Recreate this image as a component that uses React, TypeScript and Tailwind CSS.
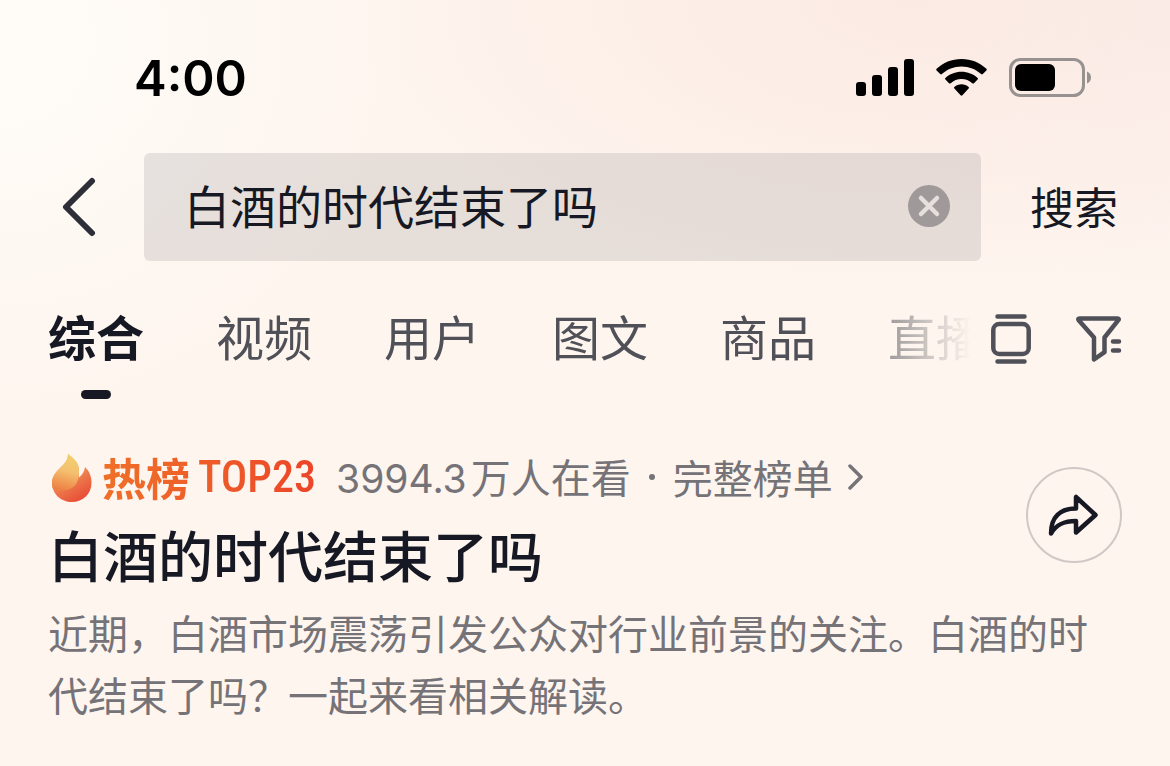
import React, { useState } from "react";

const tabs = ["综合", "视频", "用户", "图文", "商品", "直播"];

const StatusBar = () => {
  return (
    <div className="flex h-[60px] items-center justify-between pl-[134px] pr-[78px]">
      <span className="font-['Inter',sans-serif] text-[49px] font-semibold leading-none text-black">
        4:00
      </span>
      <div className="flex items-center gap-[22px]">
        <svg width="58" height="38" viewBox="0 0 58 38" aria-hidden="true">
          <rect x="0" y="23" width="10" height="14" rx="3" />
          <rect x="16" y="16" width="10" height="21" rx="3" />
          <rect x="32" y="8" width="10" height="29" rx="3" />
          <rect x="48" y="0" width="10" height="37" rx="3" />
        </svg>
        <svg width="51" height="38" viewBox="0 0 51 38" aria-hidden="true">
          <path d="M25.5 0C15.8 0 7 3.700 .6 9.800q-.8.800 0 1.600l3.600 3.600q.8.800 1.700 0C11 10.200 17.900 7.400 25.500 7.400s14.500 2.800 19.600 7.600q.9.800 1.700 0l3.600-3.600q.8-.8 0-1.600C44 3.700 35.200 0 25.500 0z" />
          <path d="M25.500 12.700c-6.200 0-11.800 2.300-16.100 6.200q-.9.800 0 1.700l3.600 3.600q.8.800 1.700 0c2.900-2.500 6.700-4.100 10.800-4.100s7.900 1.600 10.800 4.100q.9.800 1.700 0l3.600-3.600q.9-.9 0-1.700c-4.300-3.900-9.900-6.200-16.100-6.200z" />
          <path d="M25.500 25.300c-2.700 0-5.200 1-7.100 2.600q-.9.800 0 1.700l6.200 6.700q.9.900 1.800 0l6.200-6.700q.9-.9 0-1.700c-1.900-1.600-4.400-2.600-7.100-2.600z" />
        </svg>
        <svg width="83" height="40" viewBox="0 0 83 40" aria-hidden="true">
          <rect
            x="1.500"
            y="1.500"
            width="73"
            height="36"
            rx="10"
            fill="none"
            stroke="#979190"
            strokeWidth="3"
          />
          <rect x="6" y="6" width="40" height="27" rx="6" />
          <path d="M78 13.500v12c2.500-1 4-3.300 4-6s-1.500-5-4-6z" fill="#979190" />
        </svg>
      </div>
    </div>
  );
};

const SearchHeader = () => {
  const [query, setQuery] = useState("白酒的时代结束了吗");

  return (
    <header className="mt-[45px] flex items-center pl-[60px] pr-[52px]">
      <button type="button" aria-label="返回" className="mr-12 shrink-0">
        <svg width="36" height="60" viewBox="0 0 36 60" fill="none">
          <path
            d="M32 4 6 30l26 26"
            stroke="#2d2e38"
            strokeWidth="6"
            strokeLinecap="round"
            strokeLinejoin="round"
          />
        </svg>
      </button>
      <div className="flex h-[108px] min-w-0 flex-1 items-center rounded-md bg-[#161823]/10 pb-0.5 pl-10 pr-[31px]">
        <input
          type="text"
          aria-label="搜索内容"
          value={query}
          onChange={(e) => setQuery(e.target.value)}
          className="min-w-0 flex-1 bg-transparent pb-1 text-[46px] leading-[68px] text-[#161823] outline-none"
        />
        <button type="button" aria-label="清空" onClick={() => setQuery("")}>
          <svg width="42" height="42" viewBox="0 0 42 42" className="block">
            <circle cx="21" cy="21" r="21" fill="#9f9999" />
            <path
              d="m13 13 16 16M29 13 13 29"
              stroke="#e7dfdc"
              strokeWidth="4.500"
              strokeLinecap="round"
            />
          </svg>
        </button>
      </div>
      <button
        type="button"
        className="ml-[49px] shrink-0 pb-0.5 text-[44px] leading-[68px] text-[#161823]">
        搜索
      </button>
    </header>
  );
};

const TabBar = () => {
  const [active, setActive] = useState("综合");

  return (
    <nav className="mt-10 flex items-start pl-12 pr-12">
      <div className="flex min-w-0 flex-1 gap-[72px] overflow-hidden [mask-image:linear-gradient(to_left,transparent,black_150px)]">
        {tabs.map((tab) => (
          <button
            key={tab}
            type="button"
            onClick={() => setActive(tab)}
            className={`flex shrink-0 flex-col items-center gap-[21px] text-[48px] leading-[68px] ${
              tab === active ? "font-bold text-[#161823]" : "text-[#505058]"
            }`}>
            {tab}
            {tab === active && (
              <span className="h-[9px] w-[30px] rounded-full bg-[#161823]"></span>
            )}
          </button>
        ))}
      </div>
      <div className="ml-5 flex h-[76px] shrink-0 items-center gap-[45px]">
        <button type="button" aria-label="切换视图">
          <svg
            width="40"
            height="50"
            viewBox="0 0 40 50"
            fill="none"
            stroke="#505058"
            strokeWidth="4.500"
            strokeLinecap="round"
            className="block">
            <path d="M6.500 2.500h27M6.500 47.500h27" />
            <rect x="2.300" y="10" width="35.400" height="30" rx="6" />
          </svg>
        </button>
        <button type="button" aria-label="筛选">
          <svg
            width="46"
            height="46"
            viewBox="0 0 46 46"
            fill="none"
            stroke="#505058"
            strokeWidth="4.500"
            strokeLinecap="round"
            strokeLinejoin="round"
            className="block">
            <path d="M3.500 2.500h38q2 0 .8 1.700L28.500 21.500v14.700L18 43.500v-22L2.700 4.200q-1.200-1.700.8-1.700z" />
            <path d="M37 25.500h6M37 34.500h6" />
          </svg>
        </button>
      </div>
    </nav>
  );
};

const Flame = () => {
  return (
    <svg width="40" height="50" viewBox="0 -2 40 50" aria-hidden="true">
      <defs>
        <linearGradient id="flame-back" x1="0.3" y1="0.2" x2="0.7" y2="1">
          <stop offset="0" stopColor="#f5b36a" />
          <stop offset="0.5" stopColor="#ec7a4c" />
          <stop offset="1" stopColor="#e94b35" />
        </linearGradient>
        <linearGradient id="flame-front" x1="0.6" y1="0" x2="0.4" y2="1">
          <stop offset="0" stopColor="#f3d06c" />
          <stop offset="0.45" stopColor="#f4c070" />
          <stop offset="1" stopColor="#ec7f42" />
        </linearGradient>
      </defs>
      <path
        d="M16 0c5 4 11 8 11 17v6.500c3.500-2.500 5.500-6.500 6-10.500 4 3.500 6.500 9 6.500 15.500C39.500 40 31 48 20 48S0 40 0 29c0-6 3-10 7.500-14.500S16 6.500 16 0z"
        fill="url(#flame-back)"
      />
      <path
        d="M16 0c5 4 11 8 11 17 0 6-1 10-3 13-4 6-14 9-23 5-3-9 1.500-16 6.500-20.500S16 6.500 16 0z"
        fill="url(#flame-front)"
      />
    </svg>
  );
};

const HotTopic = () => {
  return (
    <article className="mt-[50px] px-12">
      <div className="flex items-start">
        <div className="min-w-0 flex-1">
          <div className="flex h-14 items-center">
            <div className="flex items-center gap-2.5 pl-1">
              <Flame />
              <span className="flex items-center gap-2 bg-gradient-to-r from-[#ef7029] to-[#ec4428] bg-clip-text text-[44px] font-bold leading-[56px] text-transparent">
                热榜
                <span className="font-['Roboto_Condensed','Noto_Sans_CJK_SC',sans-serif] font-medium">
                  TOP23
                </span>
              </span>
            </div>
            <a
              href="#board"
              className="ml-5 flex items-center text-[40px] leading-[56px] text-[#757378]">
              <span>
                <span className="mr-1 font-['Inter',sans-serif] text-[39px]">
                  3994.3
                </span>
                万人在看
              </span>
              <span className="mx-[18px] size-[6px] rounded-full bg-[#757378]"></span>
              <span>完整榜单</span>
              <svg
                width="16"
                height="26"
                viewBox="0 0 16 26"
                fill="none"
                className="ml-3.5">
                <path
                  d="m3 2 11 11L3 24"
                  stroke="#757378"
                  strokeWidth="3.500"
                  strokeLinecap="round"
                  strokeLinejoin="round"
                />
              </svg>
            </a>
          </div>
          <h1 className="mt-3 text-[55px] font-medium leading-[72px] text-[#161823]">
            白酒的时代结束了吗
          </h1>
        </div>
        <button
          type="button"
          aria-label="分享"
          className="mt-[18px] flex size-24 shrink-0 items-center justify-center rounded-full border-2 border-[#cfc8c4]">
          <svg
            width="52"
            height="42"
            viewBox="0 0 52 42"
            fill="none"
            stroke="#161823"
            strokeWidth="4.500"
            strokeLinejoin="round">
            <path d="M28 3v11.500C12 14.500 3 23 3 39.500c5-8.500 12-12.500 25-12.500v11.500L47.500 21z" />
          </svg>
        </button>
      </div>
      <p className="mt-3 text-[40px] leading-[62px] text-[#757378]">
        近期，白酒市场震荡引发公众对行业前景的关注。白酒的时代结束了吗？一起来看相关解读。
      </p>
    </article>
  );
};

const App = () => {
  return (
    <main
      lang="zh-CN"
      className="min-h-screen bg-[#fef5ee] bg-[radial-gradient(ellipse_420px_400px_at_0%_5%,#fffcf8,transparent),radial-gradient(ellipse_560px_290px_at_78%_0%,#fbeae3,transparent),radial-gradient(ellipse_300px_300px_at_100%_0%,#fbecea,transparent)] pb-8 pt-12 font-['Noto_Sans_CJK_SC',sans-serif]">
      <StatusBar />
      <SearchHeader />
      <TabBar />
      <HotTopic />
    </main>
  );
};

export default App;
